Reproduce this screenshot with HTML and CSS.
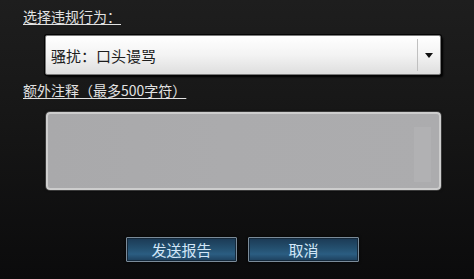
FILE: index.html
```html
<!DOCTYPE html>
<html lang="zh-CN">
<head>
<meta charset="utf-8">
<title>举报</title>
<link rel="stylesheet" href="styles.css">
</head>
<body>
<div class="dialog">
  <div class="label">选择违规行为：</div>
  <div class="select">
    <span class="select-value">骚扰：口头谩骂</span>
    <span class="select-btn"><span class="arrow"></span></span>
  </div>
  <div class="label label-2">额外注释（最多500字符）</div>
  <div class="textarea">
    <div class="scroll"></div>
  </div>
  <div class="buttons">
    <button class="btn">发送报告</button>
    <button class="btn">取消</button>
  </div>
</div>
</body>
</html>
```

FILE: styles.css
```css
html, body {
  margin: 0;
  padding: 0;
}
body {
  width: 474px;
  height: 279px;
  overflow: hidden;
  background: linear-gradient(to bottom, #1e1e1e 0%, #161616 45%, #0b0b0c 100%);
  font-family: "Noto Sans CJK SC", "Noto Sans", sans-serif;
}
.dialog {
  padding-top: 8px;
  display: flex;
  flex-direction: column;
  align-items: flex-start;
}
.label {
  margin-left: 23px;
  font-size: 14px;
  line-height: 16px;
  height: 16px;
  color: #e2e2e2;
  text-decoration: underline;
  text-underline-offset: 2px;
  text-decoration-thickness: 1px;
}
.select {
  margin-top: 11px;
  margin-left: 45px;
  width: 396px;
  height: 40px;
  box-sizing: border-box;
  border: 1px solid #7a7a7a;
  border-radius: 2px;
  background: linear-gradient(to bottom, #ffffff 0%, #f3f3f3 50%, #dedede 100%);
  box-shadow: 0 0 0 1px #050505, 2px 2px 2px #000;
  display: flex;
  align-items: center;
}
.select-value {
  flex: 1;
  padding-left: 5px;
  font-size: 15px;
  color: #1e1e1e;
}
.select-btn {
  width: 22px;
  height: 32px;
  border-left: 1px solid #c0c0c0;
  display: flex;
  align-items: center;
  justify-content: center;
}
.arrow {
  width: 0;
  height: 0;
  border-left: 4px solid transparent;
  border-right: 4px solid transparent;
  border-top: 5px solid #111;
}
.label-2 {
  margin-top: 7px;
}
.textarea {
  margin-top: 14px;
  margin-left: 46px;
  width: 395px;
  height: 78px;
  box-sizing: border-box;
  border: 2px solid #cdcdcd;
  border-radius: 4px;
  background: linear-gradient(to right, #a9a9ab 0%, #ababad 45%, #acacae 100%);
  box-shadow: 0 0 0 1px #3a3a3a, 0 0 3px #000;
  display: flex;
  justify-content: flex-end;
  padding: 13px 8px 6px 0;
}
.scroll {
  width: 17px;
  height: 55px;
  background: #b1b1b3;
}
.buttons {
  margin-top: 47px;
  margin-left: 126px;
  display: flex;
  gap: 11px;
}
.btn {
  width: 111px;
  height: 25px;
  box-sizing: border-box;
  margin: 0;
  padding: 0;
  border: 1px solid #7b8b99;
  border-radius: 1px;
  background: linear-gradient(to bottom, #1b3954 0%, #24506f 45%, #2b5d82 70%, #1d3f5c 100%);
  box-shadow: inset 0 0 0 1px #15293b, 0 0 3px #000;
  color: #d2e6f7;
  font-family: "Noto Sans CJK SC", "Noto Sans", sans-serif;
  font-size: 15px;
  line-height: 21px;
}
```
